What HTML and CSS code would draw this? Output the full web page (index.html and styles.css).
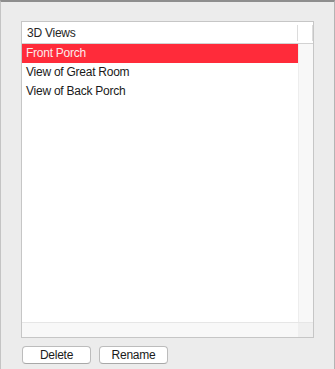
FILE: index.html
```html
<!DOCTYPE html>
<html lang="en">
  <head>
    <meta charset="UTF-8" />
    <title>3D Views</title>
    <link rel="stylesheet" href="styles.css">
  </head>
  <body>
    <div class="panel">
      <div class="table">
        <div class="table-header">
          <div class="header-cell">3D Views</div>
          <div class="header-sep"></div>
          <div class="header-corner"></div>
          <div class="header-sep"></div>
        </div>
        <div class="table-body">
          <div class="rows">
            <div class="row selected">Front Porch</div>
            <div class="row">View of Great Room</div>
            <div class="row">View of Back Porch</div>
          </div>
          <div class="vscroll"></div>
        </div>
        <div class="hscroll">
          <div class="hscroll-track"></div>
          <div class="scroll-corner"></div>
        </div>
      </div>
      <div class="buttons">
        <button class="btn">Delete</button>
        <button class="btn">Rename</button>
      </div>
    </div>
  </body>
</html>
```

FILE: styles.css
```css
body {
  margin: 0;
  padding: 0;
  background-color: #ececec;
  font-family: "Liberation Sans", Arial, sans-serif;
  font-size: 12px;
  letter-spacing: -0.25px;
}
.panel {
  box-sizing: border-box;
  height: 369px;
  border-top: 2px solid #8e8e8e;
  border-left: 1px solid #c4c4c4;
  border-right: 1px solid #b4b4b4;
  padding: 19px 0 0 20px;
}
.table {
  width: 291px;
  height: 315px;
  border: 1px solid #c6c6c6;
  background-color: #ffffff;
  display: flex;
  flex-direction: column;
}
.table-header {
  height: 21px;
  border-bottom: 1px solid #d2d2d2;
  display: flex;
  align-items: center;
}
.header-cell {
  width: 270px;
  padding-left: 5px;
  color: #262626;
}
.header-sep {
  width: 1px;
  height: 16px;
  background-color: #dcdcdc;
}
.header-corner {
  width: 14px;
}
.table-body {
  flex: 1;
  display: flex;
}
.rows {
  width: 276px;
}
.row {
  height: 19px;
  line-height: 19px;
  padding-left: 4px;
  color: #1a1a1a;
}
.row.selected {
  background-color: #ff2b3a;
  color: #fbeaea;
}
.vscroll {
  flex: 1;
  background-color: #f8f8f8;
  border-left: 1px solid #ededed;
}
.hscroll {
  height: 14px;
  border-top: 1px solid #e6e6e6;
  display: flex;
}
.hscroll-track {
  width: 276px;
  background-color: #f8f8f8;
}
.scroll-corner {
  flex: 1;
  background-color: #efefef;
}
.buttons {
  display: flex;
  gap: 8px;
  margin: 8px 0 0 1px;
}
.btn {
  width: 69px;
  height: 18px;
  padding: 0;
  border: 1px solid #bcbcbc;
  border-bottom-color: #a8a8a8;
  border-radius: 4px;
  background-color: #ffffff;
  font-family: "Liberation Sans", Arial, sans-serif;
  font-size: 12px;
  letter-spacing: -0.25px;
  color: #1a1a1a;
  line-height: 16px;
}
```
